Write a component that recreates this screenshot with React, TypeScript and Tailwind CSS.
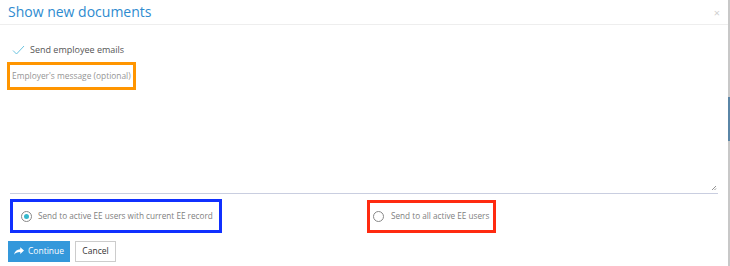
import React from 'react';

const font = { fontFamily: '"Open Sans", "Noto Sans", sans-serif' };

const ShareIcon = () => (
  <svg width="10" height="9" viewBox="0 0 16 14" fill="currentColor">
    <path d="M16 5.5 10 0v3.2C4.5 3.2 1 6.5 0 12c2.2-3 5-4.3 10-4.3V11l6-5.5z" />
  </svg>
);

const Radio = ({ checked }: { checked?: boolean }) => (
  <span className="flex h-[11px] w-[11px] items-center justify-center rounded-full border border-[#888] bg-white">
    {checked && <span className="h-[5px] w-[5px] rounded-full bg-[#35b8cc]" />}
  </span>
);

export default function App() {
  return (
    <div className="flex h-[266px] w-[730px] overflow-hidden bg-white" style={font}>
      <div className="flex flex-1 flex-col">
        {/* header */}
        <div className="flex h-[25px] items-center justify-between border-b border-[#eeeeee] pl-2 pr-[8px]">
          <span className="text-[14px] leading-none text-[#2e8bcf]">Show new documents</span>
          <span className="text-[11px] leading-none text-[#d0d0d0]">×</span>
        </div>

        {/* body */}
        <div className="flex flex-1 flex-col pl-2 pr-[10px]">
          <div className="mt-[19px] flex h-[12px] items-center gap-[5px] pl-1">
            <svg width="13" height="10" viewBox="0 0 13 10" fill="none">
              <path d="M1 5.5 4.5 9 12 1" stroke="#6cc4e0" strokeWidth="1" />
            </svg>
            <span className="text-[9px] text-[#555]">Send employee emails</span>
          </div>

          <div className="-ml-px mt-[6px] flex h-[28px] w-[129px] items-center border-[3px] border-[#ff9500] pl-[2px]">
            <span className="text-[8.4px] text-[#959595]">Employer's message (optional)</span>
          </div>

          {/* textarea area */}
          <div className="relative ml-[2px] h-[104px] border-b border-[#c9cee0]">
            <svg className="absolute bottom-[2px] right-[1px]" width="6" height="6" viewBox="0 0 6 6">
              <path d="M1 5 5 1M3.5 5 5 3.5" stroke="#777" strokeWidth="0.8" />
            </svg>
          </div>

          {/* radios */}
          <div className="mt-[5px] flex h-[34px] items-center">
            <div className="ml-[2px] flex h-[34px] w-[212px] items-center gap-[6px] border-[3px] border-[#1030ff] pl-[8px]">
              <Radio checked />
              <span className="text-[8.2px] text-[#808080]">Send to active EE users with current EE record</span>
            </div>
            <div className="ml-[145px] flex h-[33px] w-[129px] items-center gap-[7px] border-[3px] border-[#ff2a10] pl-[3px]">
              <Radio />
              <span className="text-[8.2px] text-[#808080]">Send to all active EE users</span>
            </div>
          </div>

          {/* buttons */}
          <div className="mt-[8px] flex gap-[5px]">
            <button className="flex h-[21px] w-[62px] items-center justify-center gap-[4px] bg-[#3498db] text-[8.5px] text-white">
              <ShareIcon />
              Continue
            </button>
            <button className="flex h-[21px] w-[41px] items-center justify-center border border-[#cccccc] bg-white text-[8.5px] text-[#333]">
              Cancel
            </button>
          </div>
        </div>
      </div>

      {/* scrollbar */}
      <div className="flex w-[2px] flex-col bg-[#c8c8c8]">
        <div className="h-[97px]" />
        <div className="h-[44px] bg-[#5a85a6]" />
      </div>
    </div>
  );
}
